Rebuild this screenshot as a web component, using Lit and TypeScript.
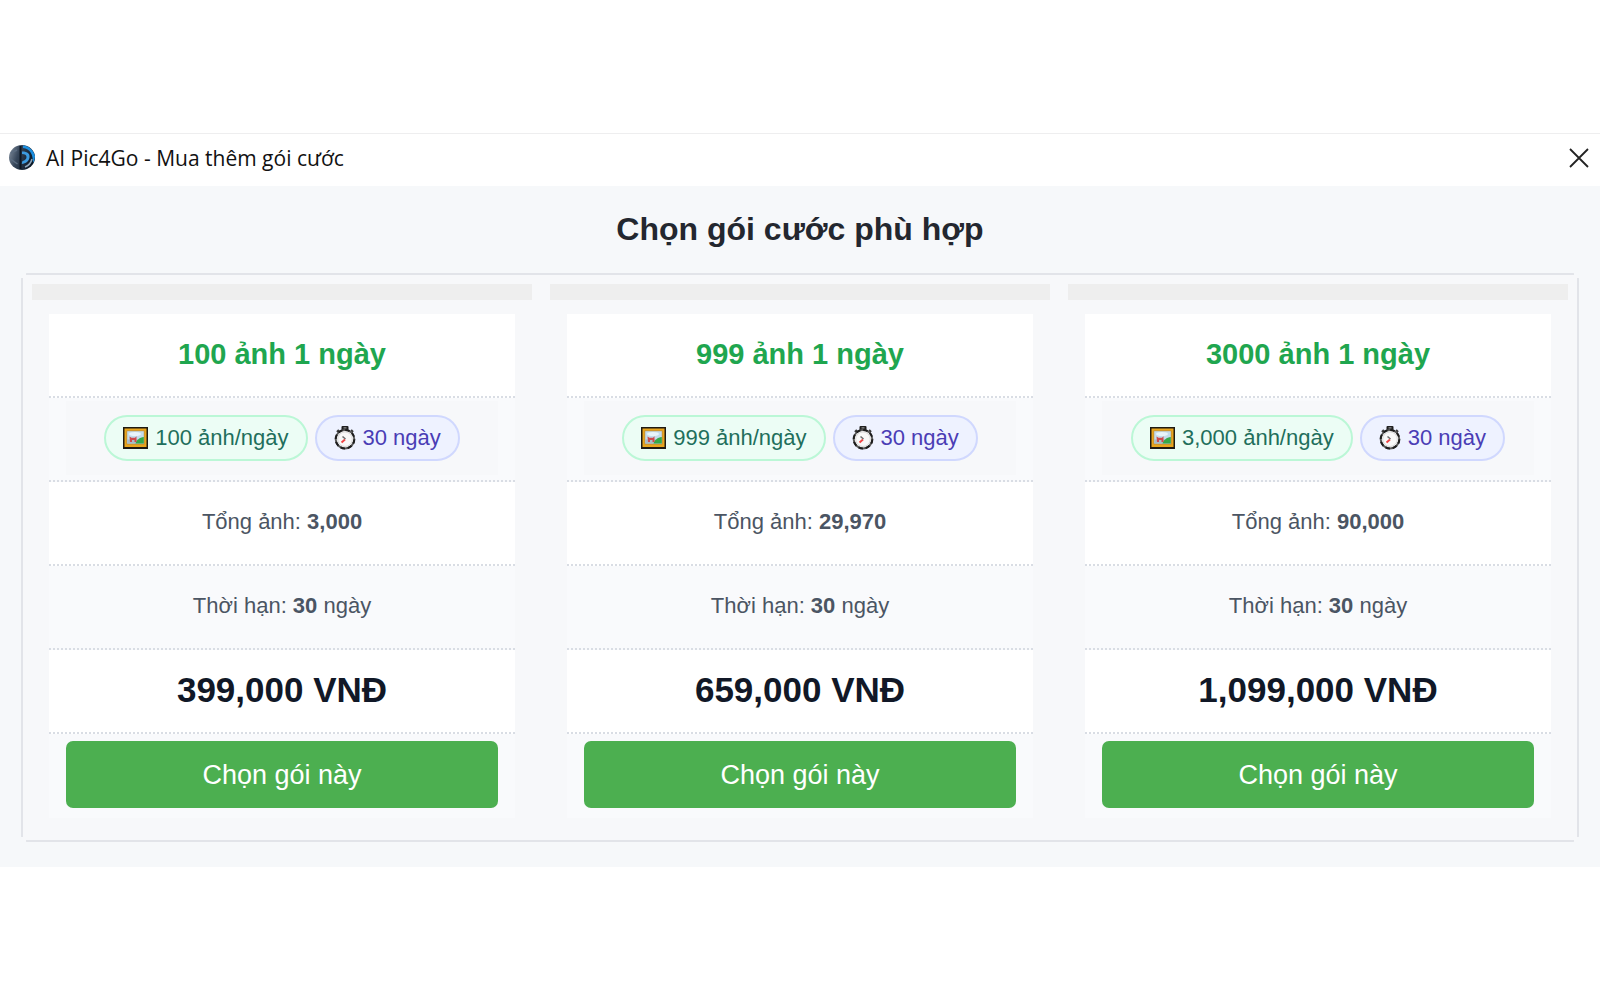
import { LitElement, html, css, svg } from "lit";
import { customElement, property } from "lit/decorators.js";

interface Plan {
  name: string;
  perDay: string;
  total: string;
  days: number;
  price: string;
}

const PLANS: Plan[] = [
  { name: "100 ảnh 1 ngày", perDay: "100", total: "3,000", days: 30, price: "399,000" },
  { name: "999 ảnh 1 ngày", perDay: "999", total: "29,970", days: 30, price: "659,000" },
  { name: "3000 ảnh 1 ngày", perDay: "3,000", total: "90,000", days: 30, price: "1,099,000" },
];

const pictureIcon = html`<svg class="icon" viewBox="0 0 25 22" width="25" height="22" aria-hidden="true">
  ${svg`<rect width="25" height="22" fill="#1f1a12"/>
  <rect x="1.5" y="1.5" width="22" height="18.5" fill="#e9a51c"/>
  <rect x="3.5" y="3.5" width="18" height="14" fill="#b98a3a"/>
  <rect x="4.2" y="4.2" width="16.6" height="12.3" fill="#c4dcec"/>
  <ellipse cx="12" cy="7" rx="6" ry="2" fill="#e9f4fa"/>
  <path d="M4.2 12.5h16.6v4H4.2z" fill="#a9bcc8"/>
  <path d="M12.5 16.5c1-3.5 4-6 8.300-6.500v6.500z" fill="#35a94a"/>
  <path d="M6.5 9.500l2 1.300h3.500l1.500-1.500v5.700h-2v-2H9v2H7z" fill="#cf4a4c"/>`}
</svg>`;

const stopwatchIcon = html`<svg class="icon" viewBox="0 0 22 24" width="22" height="24" aria-hidden="true">
  ${svg`<rect x="7.5" y="0" width="7" height="4" rx="1" fill="#1f1f1f"/>
  <rect x="9.5" y="1.2" width="3" height="1.3" fill="#8b8b8b"/>
  <path d="M3 6l2-2M19 6l-2-2" stroke="#3a3a3a" stroke-width="2.2"/>
  <circle cx="11" cy="13.2" r="9.3" fill="#f8f8f8" stroke="#5a5a5a" stroke-width="2"/>
  <circle cx="11" cy="13.2" r="9.3" fill="none" stroke="#1c1c1c" stroke-width="2" stroke-dasharray="4.5 2.8"/>
  <circle cx="11" cy="13.2" r="7.3" fill="none" stroke="#d8d8d8" stroke-width="1"/>
  <path d="M7.5 16.500l3.500-3" stroke="#ef4444" stroke-width="2"/>
  <path d="M8.5 10.500l3 2.500" stroke="#6b6b6b" stroke-width="1.5"/>`}
</svg>`;

const logo = html`<svg class="logo" viewBox="0 0 28 28" width="28" height="28" aria-hidden="true">
  ${svg`<defs>
    <linearGradient id="ball" x1="0" y1="0" x2="1" y2=".3">
      <stop offset="0" stop-color="#8793a2"/><stop offset=".42" stop-color="#36465a"/><stop offset="1" stop-color="#0b1826"/>
    </linearGradient>
  </defs>
  <ellipse cx="14" cy="13.5" rx="13" ry="12.5" fill="url(#ball)"/>
  <path d="M15 1.500c6 .5 11 5 12 11-.3 3-1 5-2 6.500C25 10 22 5 15 4z" fill="#1c8fe0"/>
  <path d="M14 7.500c6 0 8 2.500 7.500 6S18 19.500 13.500 20l1-3c2.500-.5 4-2 4-4s-1.500-3-4.500-3z" fill="#3c9be0"/>
  <path d="M12.500 2v23" stroke="#0c1622" stroke-width="2"/>
  <path d="M3 9l6-3M2.500 15l7 5" stroke="#5b6c80" stroke-width="1.5"/>
  <path d="M17 23c4-1.500 6-4 7-8" stroke="#8fa6ba" stroke-width="1.5" fill="none"/>`}
</svg>`;

@customElement("plan-card")
export class PlanCard extends LitElement {
  @property({ attribute: false }) plan!: Plan;

  static styles = css`
    :host { display: block; min-width: 0; }
    .strip { height: 16px; background: #eeeeee; }
    .rows { margin: 14px 17px 0; text-align: center; color: #4b5563; }
    .row {
      box-sizing: border-box;
      height: 84px;
      padding: 3px 17px 5px;
      display: flex;
      align-items: center;
      justify-content: center;
      border-bottom: 2px dotted #d9dde4;
      background: #ffffff;
      font-size: 22px;
      line-height: 28px;
    }
    .row.alt { background: #f9fafc; }
    .row.last { border-bottom: 0; padding: 7px 17px; align-items: flex-start; }
    .text { margin: 0; }
    .name { margin: 0; font-size: 29px; font-weight: 700; color: #1fa64f; }
    .price { margin: 0; font-size: 35px; font-weight: 700; color: #111827; }
    .badges {
      flex: 1;
      align-self: stretch;
      display: flex;
      align-items: center;
      justify-content: center;
      gap: 7px;
      background: #f7f8fa;
    }
    .badge {
      box-sizing: border-box;
      height: 46px;
      padding: 0 17px;
      display: flex;
      align-items: center;
      gap: 7px;
      border: 2px solid #bbf7d6;
      border-radius: 23px;
      background: #ecfdf5;
      color: #1f6f5c;
      white-space: nowrap;
    }
    .badge.time { border-color: #d0d8fe; background: #eef2ff; color: #4a3db5; }
    .icon { flex: none; }
    .choose {
      width: 100%;
      height: 67px;
      border: 0;
      border-radius: 7px;
      background: #4caf50;
      color: #ffffff;
      font: 27px/32px "Liberation Sans", Arial, sans-serif;
      cursor: pointer;
    }
  `;

  render() {
    const p = this.plan;
    return html`
      <div class="strip"></div>
      <article class="rows">
        <div class="row"><h2 class="name">${p.name}</h2></div>
        <div class="row alt">
          <div class="badges">
            <span class="badge">${pictureIcon}<span>${p.perDay} ảnh/ngày</span></span>
            <span class="badge time">${stopwatchIcon}<span>${p.days} ngày</span></span>
          </div>
        </div>
        <div class="row"><p class="text">Tổng ảnh: <b>${p.total}</b></p></div>
        <div class="row alt"><p class="text">Thời hạn: <b>${p.days}</b> ngày</p></div>
        <div class="row"><p class="price">${p.price} VNĐ</p></div>
        <div class="row alt last"><button class="choose" type="button">Chọn gói này</button></div>
      </article>
    `;
  }
}

@customElement("app-root")
export class AppRoot extends LitElement {
  static styles = css`
    :host {
      display: flex;
      flex-direction: column;
      justify-content: center;
      min-height: 100vh;
      background: #ffffff;
      font-family: "Liberation Sans", Arial, sans-serif;
    }
    .window { border-top: 1px solid #eeeeef; background: #f6f8fa; }
    .titlebar {
      box-sizing: border-box;
      display: flex;
      align-items: center;
      height: 52px;
      padding: 0 7px 4px 8px;
      background: #ffffff;
      color: #111111;
      font-family: "Open Sans", "Noto Sans", sans-serif;
      font-size: 21px;
    }
    .logo { flex: none; margin-right: 10px; }
    .caption { flex: 1; }
    .close { display: flex; padding: 4px; border: 0; background: none; cursor: pointer; }
    .heading {
      margin: 0;
      padding: 25px 0;
      font-size: 32px;
      line-height: 37px;
      font-weight: 700;
      text-align: center;
      color: #23272f;
    }
    /* The frame is four separate hairlines that stop short of the corners. */
    .panel {
      --line: linear-gradient(#e2e4e9, #e2e4e9);
      display: grid;
      grid-template-columns: repeat(3, minmax(0, 1fr));
      gap: 18px;
      margin: 0 21px 25px;
      padding: 11px 11px 24px;
      border-radius: 6px;
      background:
        var(--line) center top / calc(100% - 10px) 2px no-repeat,
        var(--line) center bottom / calc(100% - 10px) 2px no-repeat,
        var(--line) left center / 2px calc(100% - 10px) no-repeat,
        var(--line) right center / 2px calc(100% - 10px) no-repeat,
        #f7f8fa;
    }
  `;

  render() {
    return html`
      <main class="window">
        <header class="titlebar">
          ${logo}
          <span class="caption">AI Pic4Go - Mua thêm gói cước</span>
          <button class="close" type="button" aria-label="Đóng">
            <svg viewBox="0 0 20 20" width="20" height="20" aria-hidden="true">
              <path d="M1 1l18 18M19 1L1 19" stroke="#222" stroke-width="1.8" fill="none" />
            </svg>
          </button>
        </header>
        <h1 class="heading">Chọn gói cước phù hợp</h1>
        <section class="panel">
          ${PLANS.map((p) => html`<plan-card .plan=${p}></plan-card>`)}
        </section>
      </main>
    `;
  }
}
